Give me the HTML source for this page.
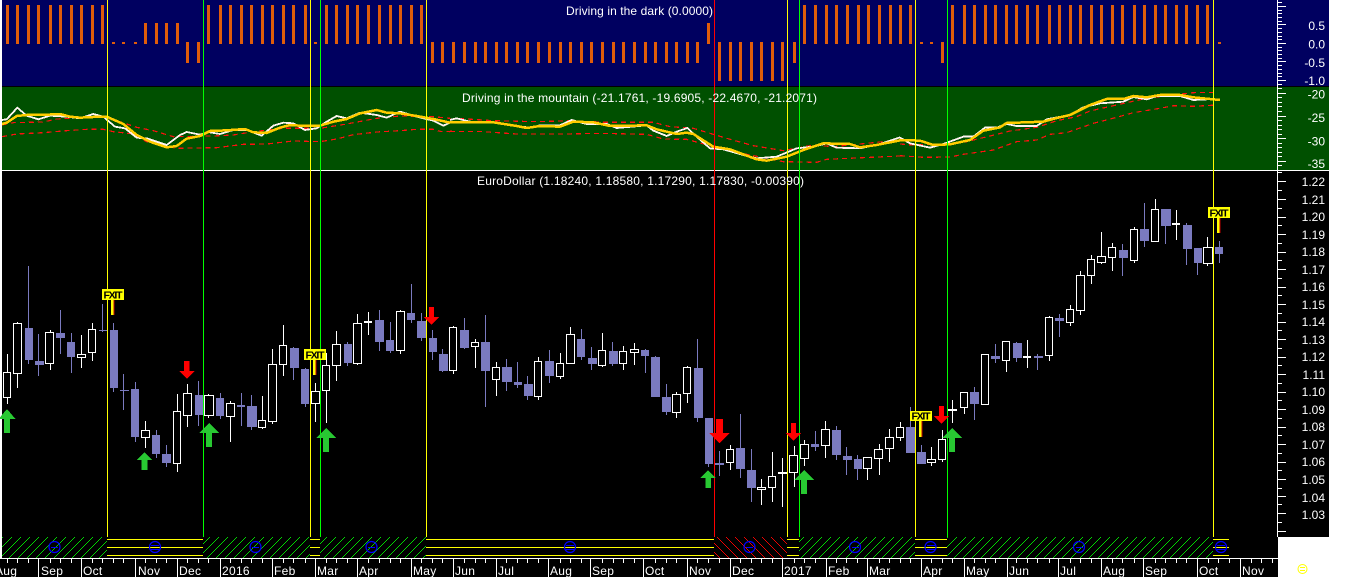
<!DOCTYPE html>
<html><head><meta charset="utf-8"><title>EuroDollar chart</title>
<style>
html,body{margin:0;padding:0;background:#fff}
svg{display:block;font-family:"Liberation Sans",Arial,sans-serif;font-size:12px}
.c{shape-rendering:crispEdges}
text{fill:#fff}
.fx text{fill:#000;font-size:10.5px;font-weight:bold}
</style></head><body>
<svg width="1352" height="577" viewBox="0 0 1352 577" xmlns="http://www.w3.org/2000/svg">
<defs>
<pattern id="hg" patternUnits="userSpaceOnUse" width="9" height="9"><path fill="#00d800" shape-rendering="crispEdges" d="M0 8h1v1h-1zM1 7h1v1h-1zM2 6h1v1h-1zM3 5h1v1h-1zM4 4h1v1h-1zM5 3h1v1h-1zM6 2h1v1h-1zM7 1h1v1h-1zM8 0h1v1h-1z"/></pattern>
<pattern id="hr" patternUnits="userSpaceOnUse" width="9" height="9"><path fill="#f00000" shape-rendering="crispEdges" d="M0 0h1v1h-1zM1 1h1v1h-1zM2 2h1v1h-1zM3 3h1v1h-1zM4 4h1v1h-1zM5 5h1v1h-1zM6 6h1v1h-1zM7 7h1v1h-1zM8 8h1v1h-1z"/></pattern>
</defs>
<g class="c">
<rect x="0" y="0" width="1352" height="577" fill="#fff"/>
<rect x="2" y="0" width="1327" height="86" fill="#000060"/>
<rect x="2" y="86" width="1327" height="1" fill="#000"/>
<rect x="2" y="87" width="1327" height="83" fill="#005000"/>
<rect x="2" y="170" width="1327" height="1" fill="#fff"/>
<rect x="2" y="171" width="1327" height="366" fill="#000"/>
<rect x="2" y="537" width="1276" height="21" fill="#000"/>
<rect x="0" y="558" width="1278" height="19" fill="#000"/>

<!-- ribbon -->
<g>
<rect x="2" y="537" width="105" height="21" fill="url(#hg)"/>
<rect x="203" y="537" width="107" height="21" fill="url(#hg)"/>
<rect x="320" y="537" width="106" height="21" fill="url(#hg)"/>
<rect x="714" y="537" width="73" height="21" fill="url(#hr)"/>
<rect x="799" y="537" width="116" height="21" fill="url(#hg)"/>
<rect x="947" y="537" width="266" height="21" fill="url(#hg)"/>
<path fill="none" stroke="#ffff00" d="M107 539.5H203M107 547.5H203M107 555.5H203M310 539.5H320M310 547.5H320M310 555.5H320M426 539.5H714M426 547.5H714M426 555.5H714M787 539.5H799M787 547.5H799M787 555.5H799M915 539.5H947M915 547.5H947M915 555.5H947M1213 539.5H1229M1213 547.5H1229M1213 555.5H1229"/>
</g>

<!-- bars -->
<path fill="none" stroke="#e05c0a" stroke-width="3" d="M7.5 5V44M17.5 5V44M28.5 5V44M38.5 5V44M50.5 5V44M60.5 5V44M71.5 5V44M81.5 5V44M92.5 5V44M102.5 5V44M208.5 5V44M220.5 5V44M230.5 5V44M241.5 5V44M251.5 5V44M262.5 5V44M272.5 5V44M283.5 5V44M293.5 5V44M305.5 5V44M326.5 5V44M336.5 5V44M347.5 5V44M357.5 5V44M368.5 5V44M379.5 5V44M390.5 5V44M400.5 5V44M411.5 5V44M421.5 5V44M804.5 5V44M815.5 5V44M826.5 5V44M836.5 5V44M847.5 5V44M858.5 5V44M868.5 5V44M879.5 5V44M890.5 5V44M900.5 5V44M910.5 5V44M952.5 5V44M964.5 5V44M974.5 5V44M985.5 5V44M995.5 5V44M1006.5 5V44M1016.5 5V44M1027.5 5V44M1037.5 5V44M1049.5 5V44M1059.5 5V44M1070.5 5V44M1080.5 5V44M1091.5 5V44M1101.5 5V44M1112.5 5V44M1122.5 5V44M1134.5 5V44M1144.5 5V44M1155.5 5V44M1165.5 5V44M1176.5 5V44M1186.5 5V44M1197.5 5V44M1207.5 5V44
M113.5 42V44M123.5 42V44M135.5 42V44M315.5 42V44M921.5 42V44M931.5 42V44M1219.5 42V44
M145.5 23V44M156.5 23V44M166.5 23V44M177.5 23V44M708.5 23V44
M187.5 42V63M198.5 42V63M432.5 42V63M442.5 42V63M453.5 42V63M464.5 42V63M475.5 42V63M485.5 42V63M496.5 42V63M506.5 42V63M517.5 42V63M527.5 42V63M538.5 42V63M549.5 42V63M560.5 42V63M570.5 42V63M581.5 42V63M591.5 42V63M602.5 42V63M613.5 42V63M623.5 42V63M634.5 42V63M645.5 42V63M655.5 42V63M666.5 42V63M676.5 42V63M687.5 42V63M697.5 42V63M794.5 42V63M942.5 42V63
M719.5 42V81M730.5 42V81M740.5 42V81M751.5 42V81M761.5 42V81M772.5 42V81M782.5 42V81"/>

<!-- moving averages -->
<g transform="scale(.33333)" fill="none">
<g stroke="#ff1010" stroke-width="3.6" stroke-dasharray="15 12">
<polyline points="6,375 40,368 130,366 170,357 300,350 350,362 410,382 460,392 520,410 640,408 700,405 760,395 850,385 960,385 1040,372 1130,355 1200,348 1300,350 1350,355"/>
<polyline points="6,410 50,402 130,398 200,392 260,388 310,388 340,395 400,402 440,425 530,445 650,443 730,433 800,432 880,423 960,425 1010,417 1060,404 1130,396 1200,392 1250,388 1300,388 1320,394 1350,395"/>
<g transform="translate(1350,0)">
<polyline points="0,358 20,355 130,362 260,365 360,362 470,367 610,367 660,380 730,385 830,415 910,437 1000,452 1090,435 1150,440 1350,420"/>
<polyline points="0,394 100,395 200,402 340,402 450,400 590,403 640,417 710,418 790,440 900,465 1000,485 1100,487 1130,478 1350,468"/>
</g>
<g transform="translate(2700,0)">
<polyline points="0,432 40,435 120,432 200,425 270,408 330,393 410,382 470,362 530,350 570,333 680,308 740,295 800,287 880,278 950,277"/>
<polyline points="0,467 70,472 150,471 190,463 280,450 350,425 410,420 450,403 500,398 580,370 650,352 700,338 780,325 820,317 880,319 950,315"/>
</g>
</g>
<g stroke="#fff4f0" stroke-width="5.5">
<polyline points="6,360 20,358 52,323 80,347 115,358 150,347 200,350 240,355 280,342 310,350 345,380 375,385 410,413 440,415 500,435 540,405 560,396 600,404 625,396 660,402 700,390 740,390 785,407 820,377 850,368 880,370 915,390 950,385 980,365 1010,348 1040,355 1080,338 1130,345 1160,353 1200,335 1250,350 1300,362 1330,377 1350,368"/>
<g transform="translate(1350,0)"><polyline points="0,360 20,355 60,365 130,367 200,378 240,383 270,376 330,376 365,360 410,372 470,372 500,384 590,376 610,392 650,408 680,395 712,384 740,410 780,445 820,448 880,465 920,475 980,470 1040,445 1090,440 1130,430 1160,443 1230,445 1290,432 1350,412"/></g>
<g transform="translate(2700,0)"><polyline points="0,413 30,430 90,443 130,432 190,410 220,410 255,383 290,383 320,372 350,378 410,378 440,358 510,345 550,322 600,310 670,305 700,291 740,298 770,288 840,288 880,300 920,298"/></g>
</g>
<g stroke="#ffcc00" stroke-width="7.5">
<polyline points="6,372 20,368 50,348 80,345 140,344 180,342 210,350 240,353 300,350 320,350 370,372 410,405 450,425 500,442 530,438 560,416 600,408 630,393 680,391 735,387 760,397 800,399 840,383 870,375 900,377 960,377 1000,365 1040,357 1080,340 1130,330 1160,338 1200,340 1250,348 1300,357 1350,368"/>
<g transform="translate(1350,0)"><polyline points="0,367 60,367 130,367 200,378 230,384 270,378 330,380 370,365 430,367 480,378 590,376 620,388 680,402 710,398 730,402 790,440 840,448 880,463 920,478 950,482 1010,470 1060,450 1120,430 1200,432 1230,442 1280,435 1350,421"/></g>
<g transform="translate(2700,0)"><polyline points="0,420 60,422 100,435 150,433 210,420 250,392 300,382 320,369 430,365 470,354 510,345 570,315 620,297 670,297 700,288 740,292 780,285 840,285 880,292 960,300"/></g>
</g>
</g>

<!-- purple candles -->
<path fill="none" stroke="#7a7abf" d="M28.5 266V364M38.5 334V376M60.5 310V354M71.5 333V373M102.5 304V332M113.5 323V392M123.5 374V410M135.5 382V442M156.5 430V458M166.5 445V467M198.5 381V426M220.5 393V419M241.5 393V426M251.5 395V430M293.5 347V380M305.5 368V407M347.5 342V366M379.5 310V351M390.5 322V353M411.5 284V323M421.5 313V341M432.5 330V360M442.5 349V372M464.5 318V349M485.5 315V407M506.5 359V391M517.5 362V388M527.5 376V400M549.5 350V383M581.5 329V360M591.5 347V370M612.5 342V366M645.5 349V373M655.5 356V397M666.5 384V415M697.5 339V422M708.5 418V467M719.5 451V476M740.5 414V478M751.5 449V502M815.5 431V451M836.5 426V460M846.5 447V475M857.5 455V480M910.5 407V453M921.5 445V464M974.5 387V420M995.5 344V363M1016.5 342V362M1037.5 354V370M1059.5 314V337M1122.5 244V276M1144.5 203V247M1165.5 209V244M1186.5 223V265M1197.5 248V275M1219.5 241V263"/>
<path fill="#7a7abf" d="M25 328H33V360H25ZM35 361H44V365H35ZM56 333H65V338H56ZM67 342H75V357H67ZM99 330H108V331H99ZM110 330H118V388H110ZM120 390H129V391H120ZM131 389H139V437H131ZM152 435H160V454H152ZM162 454H171V463H162ZM195 395H204V415H195ZM216 398H224V416H216ZM237 405H245V407H237ZM247 406H257V427H247ZM290 348H299V368H290ZM301 369H309V404H301ZM344 344H352V363H344ZM375 320H384V342H375ZM386 340H394V351H386ZM407 313H415V320H407ZM417 321H427V338H417ZM429 338H437V352H429ZM439 354H448V371H439ZM460 330H469V348H460ZM481 342H490V371H481ZM502 367H512V382H502ZM514 382H522V385H514ZM524 384H533V396H524ZM545 361H554V376H545ZM577 339H585V357H577ZM588 358H597V364H588ZM609 351H618V364H609ZM641 350H649V356H641ZM651 357H660V397H651ZM662 397H671V412H662ZM694 368H703V418H694ZM705 418H713V464H705ZM715 463H724V465H715ZM736 448H745V469H736ZM747 470H756V488H747ZM811 444H819V447H811ZM832 430H841V455H832ZM843 456H852V460H843ZM854 459H862V469H854ZM906 427H915V453H906ZM917 452H926V464H917ZM970 392H979V404H970ZM991 356H1000V359H991ZM1013 343H1022V358H1013ZM1034 356H1043V358H1034ZM1055 318H1064V321H1055ZM1119 250H1128V258H1119ZM1140 229H1149V241H1140ZM1161 209H1171V226H1161ZM1183 225H1192V249H1183ZM1194 248H1202V263H1194ZM1215 247H1223V254H1215Z"/>

<!-- white candles -->
<path fill="none" stroke="#fff" d="M7.5 354V404M17.5 322V388M50.5 330V370M81.5 335V368M92.5 323V361M145.5 421V448M177.5 394V472M187.5 384V427M208.5 394V418M230.5 401V442M262.5 396V429M272.5 349V424M283.5 325V376M315.5 383V422M326.5 353V423M336.5 331V381M357.5 314V365M368.5 312V335M400.5 310V354M453.5 326V374M475.5 339V368M496.5 362V396M538.5 357V400M560.5 353V379M570.5 327V364M602.5 333V367M623.5 346V370M634.5 343V365M676.5 392V418M687.5 366V403M730.5 445V470M761.5 479V505M772.5 452V502M782.5 458V507M794.5 446V487M804.5 440V466M825.5 421V458M867.5 457V480M879.5 444V475M889.5 429V462M900.5 422V441M931.5 447V466M942.5 430V462M952.5 400V423M964.5 392V414M985.5 354V405M1006.5 341V372M1027.5 340V368M1049.5 316V361M1070.5 305V326M1080.5 271V315M1091.5 255V284M1101.5 232V264M1112.5 243V271M1134.5 227V263M1155.5 199V242M1176.5 210V240M1207.5 237V266"/>
<path fill="#000" stroke="#fff" d="M3.5 372.5H10.5V397.5H3.5ZM13.5 323.5H21.5V373.5H13.5ZM45.5 332.5H53.5V363.5H45.5ZM77.5 354.5H85.5V357.5H77.5ZM88.5 329.5H95.5V352.5H88.5ZM141.5 430.5H149.5V437.5H141.5ZM173.5 411.5H180.5V463.5H173.5ZM183.5 393.5H191.5V415.5H183.5ZM204.5 395.5H213.5V415.5H204.5ZM226.5 403.5H234.5V416.5H226.5ZM258.5 420.5H265.5V427.5H258.5ZM268.5 364.5H276.5V421.5H268.5ZM279.5 345.5H286.5V364.5H279.5ZM311.5 391.5H319.5V403.5H311.5ZM322.5 365.5H329.5V390.5H322.5ZM332.5 344.5H340.5V365.5H332.5ZM353.5 323.5H361.5V363.5H353.5ZM396.5 311.5H404.5V350.5H396.5ZM449.5 327.5H456.5V370.5H449.5ZM471.5 342.5H478.5V346.5H471.5ZM492.5 367.5H499.5V379.5H492.5ZM534.5 361.5H541.5V396.5H534.5ZM556.5 363.5H563.5V376.5H556.5ZM566.5 334.5H574.5V363.5H566.5ZM598.5 350.5H605.5V365.5H598.5ZM619.5 351.5H626.5V363.5H619.5ZM630.5 349.5H638.5V352.5H630.5ZM672.5 394.5H680.5V412.5H672.5ZM683.5 367.5H690.5V393.5H683.5ZM726.5 449.5H733.5V462.5H726.5ZM757.5 487.5H765.5V489.5H757.5ZM768.5 476.5H775.5V487.5H768.5ZM789.5 455.5H797.5V472.5H789.5ZM800.5 444.5H808.5V458.5H800.5ZM821.5 429.5H829.5V445.5H821.5ZM863.5 457.5H871.5V468.5H863.5ZM874.5 449.5H882.5V458.5H874.5ZM885.5 437.5H893.5V448.5H885.5ZM896.5 427.5H903.5V437.5H896.5ZM927.5 459.5H935.5V462.5H927.5ZM938.5 439.5H945.5V459.5H938.5ZM960.5 392.5H967.5V407.5H960.5ZM981.5 354.5H988.5V404.5H981.5ZM1002.5 341.5H1009.5V360.5H1002.5ZM1045.5 317.5H1052.5V355.5H1045.5ZM1066.5 309.5H1073.5V322.5H1066.5ZM1076.5 275.5H1084.5V310.5H1076.5ZM1087.5 259.5H1094.5V275.5H1087.5ZM1097.5 256.5H1105.5V262.5H1097.5ZM1108.5 247.5H1115.5V257.5H1108.5ZM1130.5 229.5H1137.5V260.5H1130.5ZM1151.5 209.5H1158.5V241.5H1151.5ZM1203.5 247.5H1212.5V263.5H1203.5Z"/>
<path fill="#fff" d="M364 321H372V323H364ZM778 472H787V474H778ZM948 409H957V411H948ZM1023 356H1031V358H1023ZM1172 223H1180V225H1172Z"/>

<!-- vertical study lines -->
<path fill="none" stroke="#ffff00" d="M107.5 0V537M310.5 0V537M426.5 0V537M787.5 0V537M915.5 0V537M1213.5 0V537"/>
<path fill="none" stroke="#00ff00" d="M203.5 0V537M320.5 0V537M799.5 0V537M947.5 0V537"/>
<path fill="none" stroke="#ff0000" d="M714.5 0V537"/>
</g>

<!-- ribbon circles -->
<g fill="none" stroke="#0000ff" stroke-width="1.2">
<circle cx="54.5" cy="547" r="5.5"/><circle cx="155" cy="547" r="5.5"/><circle cx="255.5" cy="547" r="5.5"/><circle cx="371.5" cy="547" r="5.5"/><circle cx="570" cy="547" r="5.5"/><circle cx="749.5" cy="547" r="5.5"/><circle cx="855" cy="547" r="5.5"/><circle cx="930.5" cy="547" r="5.5"/><circle cx="1079" cy="547" r="5.5"/><circle cx="1221" cy="547" r="5.5"/>
<path class="c" stroke-width="1" d="M151 545.5H159M151 549.5H159M566 545.5H574M566 549.5H574M927 545.5H935M927 549.5H935M1217 545.5H1225M1217 549.5H1225M51 547.5H58M252 547.5H259M368 547.5H375M746 547.5H753M852 547.5H859M1076 547.5H1083"/>
</g>

<!-- arrows -->
<g class="c">
<path fill="#28c832" d="M7 409L15.5 419H10V433H4V419H-1.5ZM144.5 452L152 460H147.5V470H141.5V460H137ZM209 423L219 433H212V447H206V433H199ZM326 428L336 438H329V452H323V438H316ZM708 470L715.5 478H711V488H705.5V478H700.5ZM804 470L814 480H807V494H801V480H794ZM952 428L962 438H955V452H949V438H942Z"/>
<path fill="#ff0000" d="M184 361H189.5V371H194.5L187 379L179 371H184ZM429 307H434V317H439L431.5 325L424 317H429ZM716 419H723V433H730L719.5 443L709 433H716ZM791 423H796V433H801L793.5 441L786 433H791ZM939 406H944V416H949L941.5 424L934 416H939Z"/>
</g>

<!-- FXIT -->
<g class="fx">
<g class="c">
<path fill="#ffff00" d="M102 289H124V300H102ZM304 349H326V360H304ZM910 411H932V421H910ZM1208 207H1230V218H1208Z"/>
<path fill="#ffff00" d="M111 300H113.5V315H111ZM313 360H315.5V375H313ZM919 421H921.5V437H919ZM1217 218H1219.5V233H1217Z"/>
<path fill="#c00000" d="M113.5 300H114.5V315H113.5ZM315.5 360H316.5V375H315.5ZM921.5 421H922.5V437H921.5ZM1219.5 218H1220.5V233H1219.5Z"/>
</g>
<text x="103.5" y="298.5" textLength="19">FXIT</text>
<text x="305.5" y="358.5" textLength="19">FXIT</text>
<text x="911.5" y="419.5" textLength="19">FXIT</text>
<text x="1209.5" y="216.5" textLength="19">FXIT</text>
</g>

<!-- axis lines and ticks -->
<g class="c" fill="none" stroke="#fff">
<path d="M1277.5 0V537"/>
<path d="M1277 6.5H1286M1277 24.5H1286M1277 43.5H1286M1277 61.5H1286M1277 80.5H1286M1277 93.5H1286M1277 116.5H1286M1277 138.5H1286M1277 161.5H1286M1277 181.5H1286M1277 199.5H1286M1277 217.5H1286M1277 234.5H1286M1277 252.5H1286M1277 269.5H1286M1277 287.5H1286M1277 304.5H1286M1277 322.5H1286M1277 339.5H1286M1277 357.5H1286M1277 374.5H1286M1277 392.5H1286M1277 409.5H1286M1277 427.5H1286M1277 444.5H1286M1277 462.5H1286M1277 479.5H1286M1277 496.5H1286M1277 513.5H1286M1277 531.5H1286"/>
<path d="M1277 2.5H1282M1277 10.5H1282M1277 13.5H1282M1277 17.5H1282M1277 21.5H1282M1277 28.5H1282M1277 32.5H1282M1277 36.5H1282M1277 39.5H1282M1277 47.5H1282M1277 50.5H1282M1277 54.5H1282M1277 58.5H1282M1277 65.5H1282M1277 69.5H1282M1277 73.5H1282M1277 76.5H1282M1277 84.5H1282M1277 88.5H1282M1277 97.5H1282M1277 102.5H1282M1277 106.5H1282M1277 111.5H1282M1277 120.5H1282M1277 125.5H1282M1277 129.5H1282M1277 134.5H1282M1277 143.5H1282M1277 147.5H1282M1277 152.5H1282M1277 156.5H1282M1277 165.5H1282M1277 172.5H1282M1277 190.5H1282M1277 208.5H1282M1277 225.5H1282M1277 243.5H1282M1277 260.5H1282M1277 278.5H1282M1277 295.5H1282M1277 313.5H1282M1277 330.5H1282M1277 348.5H1282M1277 365.5H1282M1277 383.5H1282M1277 400.5H1282M1277 418.5H1282M1277 435.5H1282M1277 453.5H1282M1277 470.5H1282M1277 488.5H1282M1277 504.5H1282M1277 522.5H1282"/>
<path d="M0 558.5H1278"/>
<path d="M7.5 559V563M17.5 559V563M28.5 559V563M38.5 559V577M50.5 559V563M60.5 559V563M71.5 559V563M81.5 559V577M92.5 559V563M102.5 559V563M113.5 559V563M123.5 559V563M135.5 559V577M145.5 559V563M156.5 559V563M166.5 559V563M177.5 559V577M187.5 559V563M198.5 559V563M208.5 559V563M220.5 559V577M230.5 559V563M241.5 559V563M251.5 559V563M262.5 559V563M272.5 559V577M283.5 559V563M293.5 559V563M305.5 559V563M315.5 559V577M326.5 559V563M336.5 559V563M347.5 559V563M357.5 559V577M368.5 559V563M379.5 559V563M390.5 559V563M400.5 559V563M411.5 559V577M421.5 559V563M432.5 559V563M442.5 559V563M453.5 559V577M464.5 559V563M475.5 559V563M485.5 559V563M496.5 559V577M506.5 559V563M517.5 559V563M527.5 559V563M538.5 559V563M548.5 559V577M560.5 559V563M570.5 559V563M581.5 559V563M590.5 559V577M602.5 559V563M613.5 559V563M623.5 559V563M634.5 559V563M643.5 559V577M655.5 559V563M666.5 559V563M676.5 559V563M687.5 559V577M697.5 559V563M708.5 559V563M719.5 559V563M730.5 559V577M740.5 559V563M751.5 559V563M761.5 559V563M772.5 559V563M782.5 559V577M794.5 559V563M804.5 559V563M815.5 559V563M826.5 559V577M836.5 559V563M846.5 559V563M857.5 559V563M867.5 559V577M879.5 559V563M889.5 559V563M900.5 559V563M910.5 559V563M921.5 559V577M931.5 559V563M942.5 559V563M952.5 559V563M964.5 559V577M974.5 559V563M985.5 559V563M995.5 559V563M1007.5 559V577M1016.5 559V563M1027.5 559V563M1037.5 559V563M1049.5 559V563M1058.5 559V577M1070.5 559V563M1080.5 559V563M1091.5 559V563M1101.5 559V577M1112.5 559V563M1122.5 559V563M1134.5 559V563M1143.5 559V577M1155.5 559V563M1165.5 559V563M1176.5 559V563M1186.5 559V563M1197.5 559V577M1208.5 559V563M1218.5 559V563M1229.5 559V563M1240.5 559V577M1251.5 559V563M1261.5 559V563M1272.5 559V563"/>
</g>

<!-- titles -->
<text x="566" y="15" textLength="147">Driving in the dark (0.0000)</text>
<text x="462" y="102" textLength="355">Driving in the mountain (-21.1761, -19.6905, -22.4670, -21.2071)</text>
<text x="477" y="185" textLength="327">EuroDollar (1.18240, 1.18580, 1.17290, 1.17830, -0.00390)</text>

<!-- y labels -->
<g text-anchor="end">
<text x="1325" y="30">0.5</text><text x="1325" y="48.5">0.0</text><text x="1325" y="67">-0.5</text><text x="1325" y="85">-1.0</text>
<text x="1325" y="98.5">-20</text><text x="1325" y="122">-25</text><text x="1325" y="145.5">-30</text><text x="1325" y="168">-35</text>
<text x="1325" y="186">1.22</text><text x="1325" y="204">1.21</text><text x="1325" y="221">1.20</text><text x="1325" y="239">1.19</text><text x="1325" y="256">1.18</text><text x="1325" y="274">1.17</text><text x="1325" y="291">1.16</text><text x="1325" y="309">1.15</text><text x="1325" y="326">1.14</text><text x="1325" y="344">1.13</text><text x="1325" y="361">1.12</text><text x="1325" y="379">1.11</text><text x="1325" y="396">1.10</text><text x="1325" y="414">1.09</text><text x="1325" y="431">1.08</text><text x="1325" y="449">1.07</text><text x="1325" y="466">1.06</text><text x="1325" y="484">1.05</text><text x="1325" y="502">1.04</text><text x="1325" y="519">1.03</text>
</g>

<!-- x labels -->
<g letter-spacing=".3">
<text x="-5" y="575">Aug</text>
<text x="41" y="575">Sep</text><text x="83" y="575">Oct</text><text x="138" y="575">Nov</text><text x="179" y="575">Dec</text><text x="222" y="575">2016</text><text x="274" y="575">Feb</text><text x="317" y="575">Mar</text><text x="359" y="575">Apr</text><text x="413" y="575">May</text><text x="455" y="575">Jun</text><text x="498" y="575">Jul</text><text x="550" y="575">Aug</text><text x="592" y="575">Sep</text><text x="645" y="575">Oct</text><text x="689" y="575">Nov</text><text x="732" y="575">Dec</text><text x="784" y="575">2017</text><text x="828" y="575">Feb</text><text x="869" y="575">Mar</text><text x="923" y="575">Apr</text><text x="966" y="575">May</text><text x="1009" y="575">Jun</text><text x="1060" y="575">Jul</text><text x="1103" y="575">Aug</text><text x="1145" y="575">Sep</text><text x="1199" y="575">Oct</text><text x="1242" y="575">Nov</text>
</g>

<!-- smiley -->
<g fill="none" stroke="#ffff00" stroke-width="1">
<circle cx="1302.5" cy="569" r="4.5"/>
<path class="c" d="M1300 567.5H1305M1300 570.5H1305"/>
</g>
</svg>
</body></html>
